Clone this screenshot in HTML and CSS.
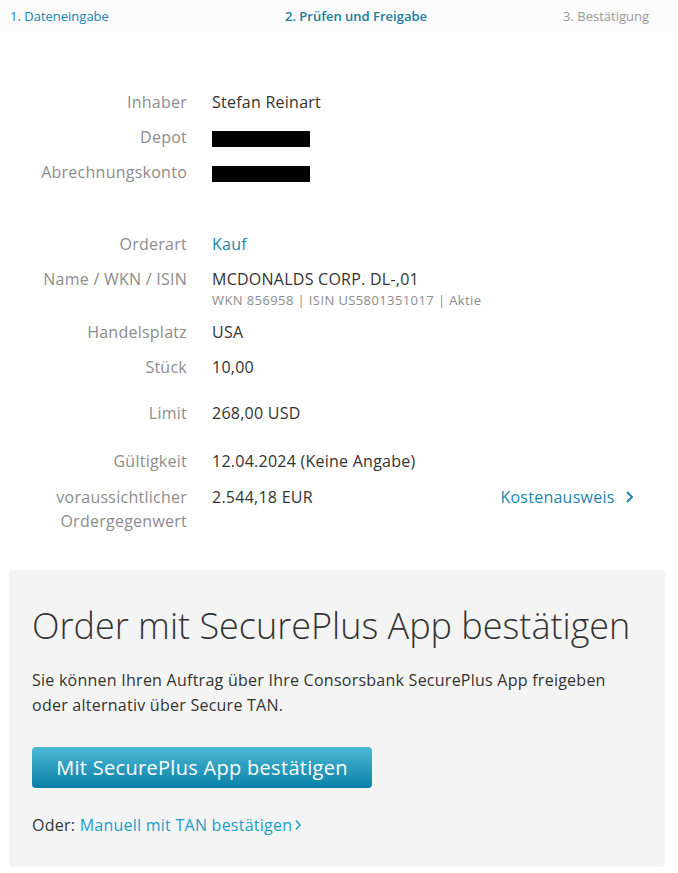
FILE: index.html
```html
<!DOCTYPE html>
<html>
<head>
<meta charset="UTF-8">
<title>Order prüfen und freigeben</title>
<link rel="stylesheet" href="styles.css">
</head>
<body>

<div class="steps">
	<span class="step done">1. Dateneingabe</span>
	<span class="step active">2. Prüfen und Freigabe</span>
	<span class="step">3. Bestätigung</span>
</div>

<div class="details first">
	<div class="row">
		<span class="label">Inhaber</span>
		<span class="value">Stefan Reinart</span>
	</div>
	<div class="row">
		<span class="label">Depot</span>
		<span class="value"><span class="redacted"></span></span>
	</div>
	<div class="row">
		<span class="label">Abrechnungskonto</span>
		<span class="value"><span class="redacted"></span></span>
	</div>
</div>

<div class="details second">
	<div class="row">
		<span class="label">Orderart</span>
		<span class="value link">Kauf</span>
	</div>
	<div class="row">
		<span class="label">Name / WKN / ISIN</span>
		<span class="value">MCDONALDS CORP. DL-,01<small class="sub">WKN 856958 | ISIN US5801351017 | Aktie</small></span>
	</div>
	<div class="row">
		<span class="label">Handelsplatz</span>
		<span class="value">USA</span>
	</div>
	<div class="row">
		<span class="label">Stück</span>
		<span class="value">10,00</span>
	</div>
	<div class="row spaced">
		<span class="label">Limit</span>
		<span class="value">268,00 USD</span>
	</div>
	<div class="row spaced more">
		<span class="label">Gültigkeit</span>
		<span class="value">12.04.2024 (Keine Angabe)</span>
	</div>
	<div class="row total">
		<span class="label">voraussichtlicher<br>Ordergegenwert</span>
		<span class="value">2.544,18 EUR</span>
		<a class="costs" href="#">Kostenausweis
			<svg width="9" height="14" viewBox="0 0 9 14"><path d="M2 2 L7 7 L2 12" fill="none" stroke="#1c86ad" stroke-width="2"/></svg>
		</a>
	</div>
</div>

<div class="confirm">
	<h1>Order mit SecurePlus App bestätigen</h1>
	<p>Sie können Ihren Auftrag über Ihre Consorsbank SecurePlus App freigeben oder alternativ über Secure TAN.</p>
	<button class="btn">Mit SecurePlus App bestätigen</button>
	<div class="alt">Oder: <a href="#">Manuell mit TAN bestätigen<svg width="8" height="12" viewBox="0 0 8 12"><path d="M2 1.5 L6 6 L2 10.5" fill="none" stroke="#1aa0c8" stroke-width="1.5"/></svg></a></div>
</div>

</body>
</html>
```

FILE: styles.css
```css
body{
	margin: 0;
	font-family: "Open Sans", "Liberation Sans", sans-serif;
	font-size: 16px;
	letter-spacing: 0.25px;
	color: #333;
	background: #fff;
}

.steps{
	display: grid;
	grid-template-columns: 275px 1fr auto;
	padding: 0 29px 0 10px;
	height: 32px;
	align-items: center;
	font-size: 13px;
	letter-spacing: 0;
	background: #fcfcfc;
}
.step{
	color: #999;
}
.step.done{
	color: #1a82aa;
}
.step.active{
	color: #1a7aa0;
	font-weight: 600;
}

.details{
	display: flex;
	flex-direction: column;
	gap: 11px;
	padding-right: 44px;
}
.details.first{
	margin-top: 58px;
}
.details.second{
	margin-top: 48px;
}
.row{
	display: grid;
	grid-template-columns: 187px 1fr auto;
	column-gap: 25px;
	line-height: 24px;
}
.row.spaced{
	margin-top: 11px;
}
.row.more{
	margin-top: 13px;
}
.row.total{
	margin-top: 1px;
}
.label{
	text-align: right;
	color: #8c8c8c;
}
.value{
	color: #333;
}
.link{
	color: #1c86ad;
}
.sub{
	display: block;
	font-size: 13px;
	line-height: 18px;
	letter-spacing: 0.4px;
	color: #8c8c8c;
}
.redacted{
	display: inline-block;
	width: 98px;
	height: 16px;
	background: #000;
	vertical-align: middle;
}
.costs{
	color: #1c86ad;
	text-decoration: none;
}
.costs svg{
	margin-left: 6px;
	vertical-align: -1px;
}

.confirm{
	margin: 37px 13px 7px 9px;
	padding: 34px 23px 30px 23px;
	background: #f4f4f4;
	border-radius: 4px;
}
.confirm h1{
	margin: 0;
	font-size: 36px;
	font-weight: 300;
	line-height: 44px;
	letter-spacing: 0;
	color: #333;
}
.confirm p{
	margin: 20px 0 0 0;
	line-height: 25px;
}
.btn{
	margin-top: 29px;
	width: 340px;
	height: 41px;
	border: none;
	border-radius: 4px;
	background: linear-gradient(#4cbad6, #0a7fa6);
	color: #fff;
	font-family: inherit;
	font-size: 20px;
	letter-spacing: 0.3px;
}
.alt{
	margin-top: 25px;
	line-height: 24px;
}
.alt a{
	color: #1aa0c8;
	text-decoration: none;
}
.alt svg{
	margin-left: 2px;
}
```
